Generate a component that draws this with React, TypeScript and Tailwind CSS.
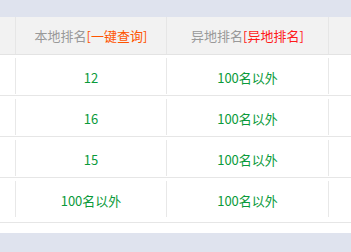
const rows = [
  { local: "12", remote: "100名以外" },
  { local: "16", remote: "100名以外" },
  { local: "15", remote: "100名以外" },
  { local: "100名以外", remote: "100名以外" },
];

const font = { fontFamily: '"Noto Sans CJK SC", "Noto Sans", sans-serif' };

export default function App() {
  return (
    <div className="w-[351px] h-[252px] overflow-hidden bg-[#dfe3ee] pt-[17px]" style={font}>
      <div className="bg-white pb-[10px] text-[13px]">
        {/* header */}
        <div className="grid grid-cols-[15px_151px_162px_1fr] h-[38px] bg-[#f2f2f2] border-b border-[#e3e3e3]">
          <div />
          <div className="flex items-center justify-center border-l border-[#e6e6e6] text-[#999] pt-[1px]">
            本地排名<span className="text-[#ff5400]">[一键查询]</span>
          </div>
          <div className="flex items-center justify-center border-l border-[#e6e6e6] text-[#999] pt-[1px]">
            异地排名<span className="text-[#ff1a1a]">[异地排名]</span>
          </div>
          <div className="border-l border-[#e6e6e6]" />
        </div>

        {/* rows */}
        {rows.map((r, i) => {
          const last = i === rows.length - 1;
          return (
            <div
              key={i}
              className={`grid grid-cols-[15px_151px_162px_1fr] border-b border-[#e6e6e6] text-[#0a9a3a] ${last ? "h-[45px]" : "h-[41px]"}`}
            >
              <div />
              <div className={`mt-[3px] flex items-center justify-center border-l border-[#e8e8e8] pt-[4px] ${last ? "mb-[5px]" : "mb-[1px]"}`}>{r.local}</div>
              <div className={`mt-[3px] flex items-center justify-center border-l border-[#e8e8e8] pt-[4px] ${last ? "mb-[5px]" : "mb-[1px]"}`}>{r.remote}</div>
              <div className={`mt-[3px] border-l border-[#e8e8e8] ${last ? "mb-[5px]" : "mb-[1px]"}`} />
            </div>
          );
        })}
      </div>
    </div>
  );
}
